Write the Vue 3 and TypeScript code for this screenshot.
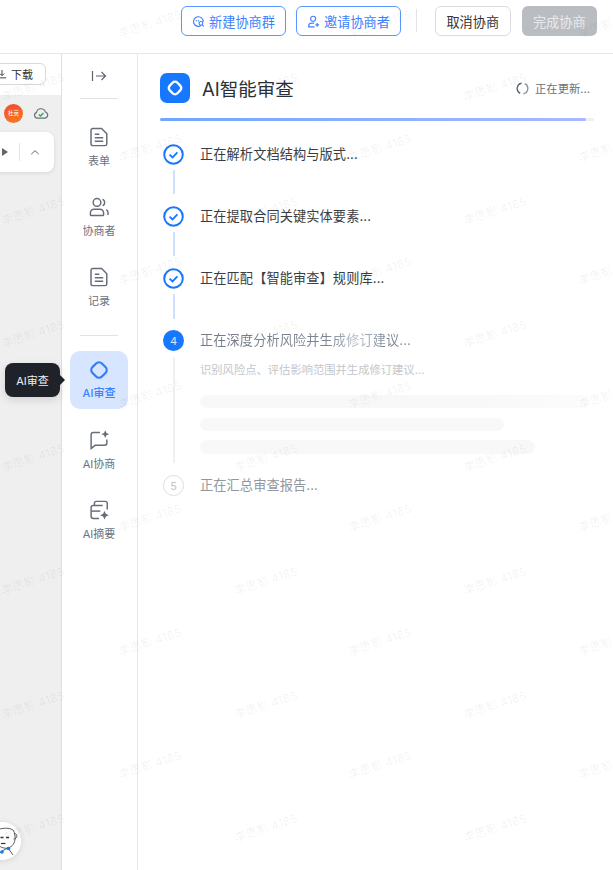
<script setup lang="ts">
interface NavItem {
  label: string
  paths: string[]
  dots?: string[]
  active?: boolean
}

interface Step {
  id: number
  text: string
  done: boolean
}

const docPaths = [
  'M5.2 2.7h9.600l5.700 5.700v11.100a1.900 1.900 0 0 1-1.900 1.900H5.200a1.900 1.900 0 0 1-1.900-1.900V4.600a1.900 1.900 0 0 1 1.900-1.900z',
  'M7.400 9h5M7.400 12.800h9.200M7.400 16.600h9.200',
]

const topNav: NavItem[] = [
  { label: '表单', paths: docPaths },
  {
    label: '协商者',
    paths: [
      'M9.800 2.800a4.200 4.200 0 1 1 0 8.400 4.200 4.200 0 0 1 0-8.400z',
      'M2.600 20.400v-2a4 4 0 0 1 4-4h6.400a4 4 0 0 1 4 4v2a.9.900 0 0 1-.9.900H3.500a.9.900 0 0 1-.9-.900z',
      'M16 3.300a4.200 4.200 0 0 1 0 7.400',
      'M20 14.800a3.800 3.800 0 0 1 1.800 3.200v2.600',
    ],
  },
  { label: '记录', paths: docPaths },
]

const aiNav: NavItem[] = [
  {
    label: 'AI协商',
    paths: ['M13 3.800H5.800a2.400 2.400 0 0 0-2.400 2.400V21.200l4.400-3.400h10.400a2.400 2.400 0 0 0 2.400-2.400V11.500'],
    dots: ['M18.800 1.400l1.300 2.900 2.900 1.300-2.900 1.300-1.300 2.900-1.300-2.900-2.900-1.300 2.900-1.300z'],
  },
  {
    label: 'AI摘要',
    paths: [
      'M7 7V4.600a2 2 0 0 1 2-2h10a2 2 0 0 1 2 2V11.500',
      'M12 21.200H5.800a2.400 2.400 0 0 1-2.400-2.400V9.400A2.400 2.400 0 0 1 5.800 7H16',
      'M3.600 13.200h9.800',
    ],
    dots: ['M18 13l1.500 3.200 3.200 1.500-3.200 1.500L18 22.400l-1.500-3.200-3.200-1.500 3.200-1.500z'],
  },
]

const doneSteps: Step[] = [
  { id: 1, text: '正在解析文档结构与版式...', done: true },
  { id: 2, text: '正在提取合同关键实体要素...', done: true },
  { id: 3, text: '正在匹配【智能审查】规则库...', done: true },
]

// watermark repeats in six staggered columns
const marks = [33, 150, 266, 380, 495, 610].flatMap((x, col) => {
  const first = col % 2 === 0 ? 87 : 24
  return Array.from({ length: 7 }, (_, row) => ({
    key: `${col}-${row}`,
    left: x - 33,
    top: first + row * 123.5 - 10,
  }))
})
</script>

<template>
  <div class="page">
    <header class="topbar">
      <button class="btn btn-blue">
        <svg class="btn-icon" viewBox="0 0 14 14" fill="none" stroke="currentColor" stroke-width="1.2">
          <path d="M12 7.600a5.200 5.200 0 1 0-2.200 3.700" />
          <path d="M4.600 6.200h.01M7 6.200h.01" stroke-linecap="round" stroke-width="1.400" />
          <circle cx="9.600" cy="9" r="2" />
          <path d="M11 10.500l1.600 1.700" />
        </svg>
        新建协商群
      </button>
      <button class="btn btn-blue btn-second">
        <svg class="btn-icon" viewBox="0 0 14 14" fill="none" stroke="currentColor" stroke-width="1.2">
          <circle cx="6.600" cy="4" r="2.700" />
          <path d="M7.600 8.800H5a3.200 3.200 0 0 0-3.200 3.200v.8h6.400" />
          <path d="M11 8.600v4M9 10.600h4" />
        </svg>
        邀请协商者
      </button>
      <span class="top-divider"></span>
      <button class="btn btn-plain">取消协商</button>
      <button class="btn btn-disabled">完成协商</button>
    </header>

    <div class="body">
      <aside class="doc-side">
        <div class="doc-tools">
          <button class="download">
            <svg class="download-icon" viewBox="0 0 12 12" fill="none" stroke="#333" stroke-width="1.1">
              <path d="M6 1.200v6.600M3.400 5.400L6 8l2.600-2.600M1 10.600h10" />
            </svg>
            下载
          </button>
        </div>
        <div class="doc-status">
          <span class="user-dot">杜英</span>
          <svg class="cloud" viewBox="0 0 16 16" fill="none">
            <path
              d="M4.400 13.200a3 3 0 0 1-.9-5.800 4.600 4.600 0 0 1 8.900-.4 3.200 3.200 0 0 1-.3 6.200z"
              stroke="#6b7078"
              stroke-width="1.2"
            />
            <path d="M5.800 9.400l1.700 1.600 2.900-3" stroke="#1fb04b" stroke-width="1.400" />
          </svg>
        </div>
        <div class="pager">
          <i class="play"></i>
          <span class="pager-line"></span>
          <svg class="chev" viewBox="0 0 12 8" fill="none" stroke="#666" stroke-width="1.2">
            <path d="M1.500 6L6 1.800 10.500 6" />
          </svg>
        </div>
        <div class="helper">
          <svg viewBox="0 0 38 38" width="38" height="38" fill="none" stroke="#333" stroke-width="0.8">
            <circle cx="19" cy="19" r="19" fill="#fff" stroke="none" />
            <path d="M13 9c3-3 13-4 17-1 2 3 3 9 1 13-2 4-6 6-10 5-5-1-9-5-9-10 0-3 0-5 1-7z" fill="#fff" />
            <path d="M31 12c2-1 3.500 1 2.500 3-.5 1.500-1.500 2-3 2" />
            <path d="M17.500 15.500h3M23 15.500h3" stroke-width="1.400" />
            <path d="M18 21.500h4.500" stroke-width="1.200" />
            <path d="M14 33l5-4 6-3 5 7" />
            <circle cx="19" cy="30" r="1.800" fill="#1677ff" stroke="none" />
            <circle cx="25.500" cy="26.500" r="1.800" fill="#1677ff" stroke="none" />
          </svg>
        </div>
      </aside>

      <nav class="rail">
        <svg class="collapse" viewBox="0 0 16 14" fill="none" stroke="#5f6672" stroke-width="1.2">
          <path d="M1.500 2v10M5 7h9.500M10.500 3l4 4-4 4" />
        </svg>
        <span class="rail-line rail-line-top"></span>

        <div v-for="item in topNav" :key="item.label" class="rail-item">
          <svg class="rail-icon" viewBox="0 0 24 24" fill="none" stroke="#666c78" stroke-width="1.600">
            <path v-for="d in item.paths" :key="d" :d="d" />
          </svg>
          <span>{{ item.label }}</span>
        </div>

        <span class="rail-line rail-line-mid"></span>

        <div class="rail-item rail-item-active">
          <svg class="rail-icon" viewBox="0 0 24 24" fill="none" stroke="#2f7bff" stroke-width="2.400">
            <rect x="4.750" y="4.750" width="14.500" height="14.500" rx="4.500" transform="rotate(45 12 12)" />
          </svg>
          <span>AI审查</span>
        </div>

        <div v-for="item in aiNav" :key="item.label" class="rail-item">
          <svg class="rail-icon" viewBox="0 0 24 24" fill="none" stroke="#666c78" stroke-width="1.600">
            <path v-for="d in item.paths" :key="d" :d="d" />
            <path v-for="d in item.dots" :key="d" :d="d" fill="#666c78" stroke="none" />
          </svg>
          <span>{{ item.label }}</span>
        </div>
      </nav>

      <main class="review">
        <div class="review-head">
          <span class="logo">
            <svg viewBox="0 0 24 24" width="24" height="24" fill="none" stroke="#fff" stroke-width="2.400">
              <rect x="6.600" y="6.600" width="10.800" height="10.800" rx="3.400" transform="rotate(45 12 12)" />
            </svg>
          </span>
          <h1>AI智能审查</h1>
          <div class="updating">
            <svg viewBox="0 0 14 14" width="13" height="13" fill="none" stroke="#5c6470" stroke-width="1.500">
              <path d="M6 1.390A5.700 5.700 0 0 0 4.500 12.120" />
              <path d="M8 12.610A5.700 5.700 0 0 0 9.500 1.880" stroke="#8d939c" />
            </svg>
            正在更新...
          </div>
        </div>
        <div class="progress"><span class="progress-fill"></span></div>

        <ol class="steps">
          <li v-for="step in doneSteps" :key="step.id" class="step">
            <div class="step-rail">
              <svg class="step-check" viewBox="0 0 21 21" fill="none" stroke="#1677ff">
                <circle cx="10.500" cy="10.500" r="9.300" stroke-width="2" />
                <path d="M6.600 10.700l2.900 2.700 4.900-5" stroke-width="1.800" />
              </svg>
              <span class="step-line"></span>
            </div>
            <p class="step-text">{{ step.text }}</p>
          </li>

          <li class="step">
            <div class="step-rail">
              <span class="num num-active">4</span>
              <span class="step-line step-line-long"></span>
            </div>
            <div class="step-body">
              <p class="step-text step-text-running">正在深度分析风险并生成修订建议...</p>
              <p class="step-sub">识别风险点、评估影响范围并生成修订建议...</p>
              <div class="skeleton skeleton-a"></div>
              <div class="skeleton skeleton-b"></div>
              <div class="skeleton skeleton-c"></div>
            </div>
          </li>

          <li class="step">
            <div class="step-rail">
              <span class="num">5</span>
            </div>
            <p class="step-text step-text-wait">正在汇总审查报告...</p>
          </li>
        </ol>
      </main>
    </div>

    <div class="tooltip">AI审查</div>

    <div class="marks">
      <span
        v-for="m in marks"
        :key="m.key"
        class="mark"
        :style="{ left: m.left + 'px', top: m.top + 'px' }"
      >李思影 4185</span>
    </div>
  </div>
</template>

<style scoped>
.page {
  position: relative;
  width: 613px;
  height: 870px;
  overflow: hidden;
  display: flex;
  flex-direction: column;
  background: #fff;
  color: #333;
  font-family: Inter, "Noto Sans CJK SC", sans-serif;
}

.topbar {
  height: 54px;
  box-sizing: border-box;
  flex: none;
  display: flex;
  align-items: flex-start;
  justify-content: flex-end;
  padding: 6px 16px 0 0;
  border-bottom: 1px solid #e8e8e8;
}

.btn {
  height: 30px;
  width: 75.500px;
  box-sizing: border-box;
  display: flex;
  align-items: center;
  justify-content: center;
  border-radius: 6px;
  border: 1px solid transparent;
  background: #fff;
  font: inherit;
  font-size: 13.200px;
  padding: 0;
}

.btn-blue {
  width: 105px;
  gap: 4px;
  border-color: #5a96ff;
  color: #3d7fff;
}

.btn-second {
  margin-left: 10px;
}

.btn-icon {
  width: 13px;
  height: 13px;
}

.top-divider {
  width: 1px;
  height: 23px;
  margin: 3px 18px 0 15px;
  background: #e3e3e3;
}

.btn-plain {
  border-color: #dcdcdc;
  color: #333;
}

.btn-disabled {
  margin-left: 11px;
  background: #b9bdc2;
  color: #e9eaec;
}

.body {
  flex: 1;
  min-height: 0;
  display: flex;
}

.doc-side {
  position: relative;
  width: 62px;
  flex: none;
  box-sizing: border-box;
  border-right: 1px solid #dfdfdf;
  background: #efefef;
  overflow: hidden;
}

.doc-tools {
  height: 41px;
  box-sizing: border-box;
  background: #fff;
  display: flex;
  justify-content: flex-end;
  padding: 9px 15px 0 0;
}

.download {
  flex: none;
  width: 60px;
  height: 22px;
  box-sizing: border-box;
  display: flex;
  align-items: center;
  justify-content: flex-end;
  gap: 4px;
  padding: 0 12px 0 0;
  background: #fff;
  border: 1px solid #d9d9d9;
  border-radius: 6px;
  font: inherit;
  font-size: 11px;
  color: #333;
}

.download-icon {
  width: 10px;
  height: 10px;
}

.doc-status {
  height: 36px;
  display: flex;
  align-items: center;
  justify-content: flex-end;
  gap: 10px;
  padding-right: 12px;
}

.user-dot {
  flex: none;
  width: 19px;
  height: 19px;
  border-radius: 50%;
  display: flex;
  align-items: center;
  justify-content: center;
  background: linear-gradient(160deg, #f04a2f, #fb7d1f);
  color: #fff;
  font-size: 5.500px;
  white-space: nowrap;
}

.cloud {
  width: 16px;
  height: 16px;
  flex: none;
}

.pager {
  margin: 1px 7px 0 -40px;
  height: 40px;
  display: flex;
  align-items: center;
  justify-content: flex-end;
  background: #fff;
  border-radius: 8px;
  box-shadow: 0 1px 4px rgba(0, 0, 0, 0.1);
  padding-right: 14px;
}

.play {
  width: 0;
  height: 0;
  border-left: 6px solid #666;
  border-top: 4px solid transparent;
  border-bottom: 4px solid transparent;
}

.pager-line {
  width: 1px;
  height: 18px;
  margin: 0 10px 0 11px;
  background: #e4e4e4;
}

.chev {
  width: 10px;
  height: 7px;
}

.helper {
  position: absolute;
  left: -17px;
  top: 768px;
  width: 38px;
  height: 38px;
  border-radius: 50%;
  box-shadow: 0 1px 6px rgba(0, 0, 0, 0.12);
}

.rail {
  width: 76px;
  flex: none;
  box-sizing: border-box;
  border-right: 1px solid #e8e8e8;
  display: flex;
  flex-direction: column;
  align-items: center;
  padding: 15px 9px 0 8px;
  background: #fff;
}

.collapse {
  width: 16px;
  height: 14px;
}

.rail-line {
  width: 38px;
  height: 1px;
  flex: none;
  background: #e2e2e2;
}

.rail-line-top {
  margin: 15px 0 19px;
}

.rail-line-mid {
  margin: 7px 0 15px;
}

.rail-item {
  width: 58px;
  height: 58px;
  flex: none;
  margin-bottom: 12px;
  border-radius: 10px;
  display: flex;
  flex-direction: column;
  align-items: center;
  padding-top: 8px;
  box-sizing: border-box;
  font-size: 11px;
  line-height: 16px;
  color: #6b7280;
  gap: 5px;
}

.rail-icon {
  width: 22px;
  height: 22px;
  flex: none;
}

.rail-item-active {
  background: #d7e5ff;
  color: #3b82ff;
  font-weight: 500;
  gap: 4px;
}

.review {
  flex: 1;
  min-width: 0;
  padding: 19px 23px 0 22px;
  background: #fff;
}

.review-head {
  display: flex;
  align-items: center;
  height: 30px;
}

.logo {
  width: 30px;
  height: 30px;
  flex: none;
  border-radius: 7px;
  background: #1677ff;
  display: flex;
  align-items: center;
  justify-content: center;
}

.review-head h1 {
  margin: 0 0 0 12px;
  font-size: 18.500px;
  font-weight: 400;
  color: #2b2f36;
}

.updating {
  margin-left: auto;
  display: flex;
  align-items: center;
  gap: 6px;
  font-size: 11.300px;
  color: #6b6f76;
}

.progress {
  margin: 15px -4px 0 0;
  height: 3px;
  border-radius: 2px;
  background: #f0f0f0;
}

.progress-fill {
  display: block;
  width: 426px;
  height: 3px;
  border-radius: 2px;
  background: linear-gradient(90deg, #6fa6ff, #a9b9ff);
}

.steps {
  list-style: none;
  margin: 22.500px 0 0;
  padding: 0 0 0 3px;
}

.step {
  display: flex;
  gap: 16px;
}

.step-rail {
  width: 21px;
  flex: none;
  display: flex;
  flex-direction: column;
  align-items: center;
}

.step-check {
  width: 21px;
  height: 21px;
  flex: none;
}

.step-line {
  width: 2px;
  height: 24.300px;
  margin: 5.500px 0 11.400px;
  background: #cfe0ff;
}

.step-line-long {
  height: 106.600px;
  margin-bottom: 12.200px;
  background: #f0f0f0;
}

.step-text {
  margin: 0;
  font-size: 13.200px;
  line-height: 21px;
  letter-spacing: 0.1px;
  color: #3a3d42;
  white-space: nowrap;
}

.step-text-running {
  background: linear-gradient(90deg, #747c8a 0, #7d8594 60%, #b9c1cd 74%, #7d8594 88%);
  -webkit-background-clip: text;
  background-clip: text;
  color: transparent;
  width: max-content;
}

.step-text-wait {
  color: #92969d;
}

.step-body {
  flex: 1;
  min-width: 0;
}

.step-sub {
  margin: 11px 0 0;
  font-size: 11.300px;
  line-height: 16px;
  color: #c3c6cb;
  white-space: nowrap;
}

.skeleton {
  height: 13.300px;
  border-radius: 7px;
  margin-top: 9.300px;
  background: #f8f8f8;
}

.skeleton-a {
  margin-top: 17px;
  width: 390px;
  background: linear-gradient(90deg, #f8f8f8 70%, #fcfcfc);
}

.skeleton-b {
  width: 304px;
}

.skeleton-c {
  width: 335px;
}

.num {
  width: 21px;
  height: 21px;
  flex: none;
  box-sizing: border-box;
  border-radius: 50%;
  border: 1px solid #dedede;
  display: flex;
  align-items: center;
  justify-content: center;
  font-size: 11px;
  color: #c4c4c4;
}

.num-active {
  border: none;
  background: #1677ff;
  color: #dce9ff;
}

.tooltip {
  position: absolute;
  left: 5px;
  top: 363px;
  width: 55px;
  height: 34px;
  border-radius: 8px;
  background: #1f2329;
  color: #f0f0f0;
  font-size: 11px;
  display: flex;
  align-items: center;
  justify-content: center;
  box-shadow: 0 3px 10px rgba(0, 0, 0, 0.12);
}

.tooltip::after {
  content: "";
  position: absolute;
  left: 100%;
  top: 12px;
  border-left: 5px solid #1f2329;
  border-top: 5px solid transparent;
  border-bottom: 5px solid transparent;
}

.marks {
  position: absolute;
  inset: 0;
  pointer-events: none;
}

.mark {
  position: absolute;
  width: 66px;
  height: 20px;
  line-height: 20px;
  text-align: center;
  font-size: 11.500px;
  letter-spacing: 0.2px;
  white-space: nowrap;
  color: rgba(0, 0, 0, 0.065);
  transform: rotate(-18deg);
}
</style>

<style>
html,
body {
  margin: 0;
  background: #fff;
}
</style>
